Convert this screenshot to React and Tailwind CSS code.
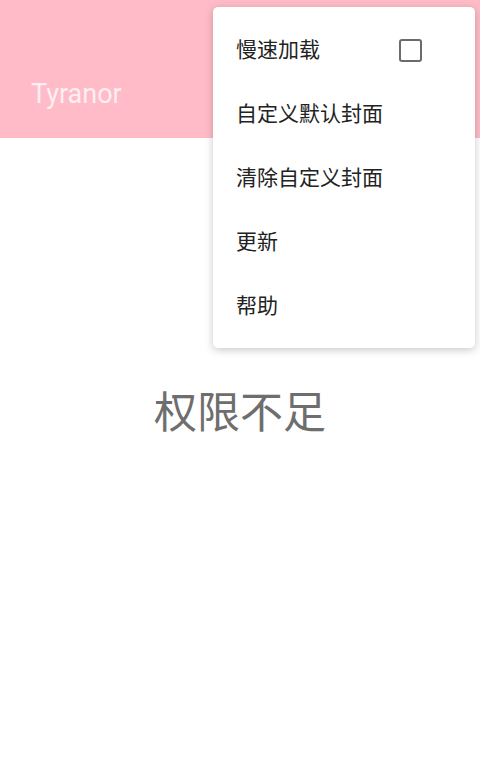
import React from "react";

export default function App() {
  const items = ["慢速加载", "自定义默认封面", "清除自定义封面", "更新", "帮助"];
  return (
    <div
      className="relative w-[480px] h-[782px] bg-white overflow-hidden"
      style={{ fontFamily: 'Roboto, "Noto Sans CJK SC", sans-serif' }}
    >
      <div className="h-[138px] bg-[#ffbcc8] flex items-end pl-[31px] pb-[30px]">
        <span className="text-[27px] text-[#fdeef1] leading-none">Tyranor</span>
      </div>
      <div className="flex justify-center pt-[254px]">
        <span className="text-[43px] text-[#6e6e6e] leading-none">权限不足</span>
      </div>
      <div className="absolute left-[213px] top-[7px] w-[262px] bg-white rounded-[5px] shadow-[0_2px_8px_rgba(0,0,0,0.22)] pt-[11px] pb-[10px]">
        {items.map((t, i) => (
          <div key={t} className="h-[64px] flex items-center pl-[23px] pr-[53px] justify-between">
            <span className="text-[21px] text-[#222] leading-none">{t}</span>
            {i === 0 && (
              <span className="w-[23px] h-[23px] border-[2.5px] border-[#6b6b6b] rounded-[3px]" />
            )}
          </div>
        ))}
      </div>
    </div>
  );
}
